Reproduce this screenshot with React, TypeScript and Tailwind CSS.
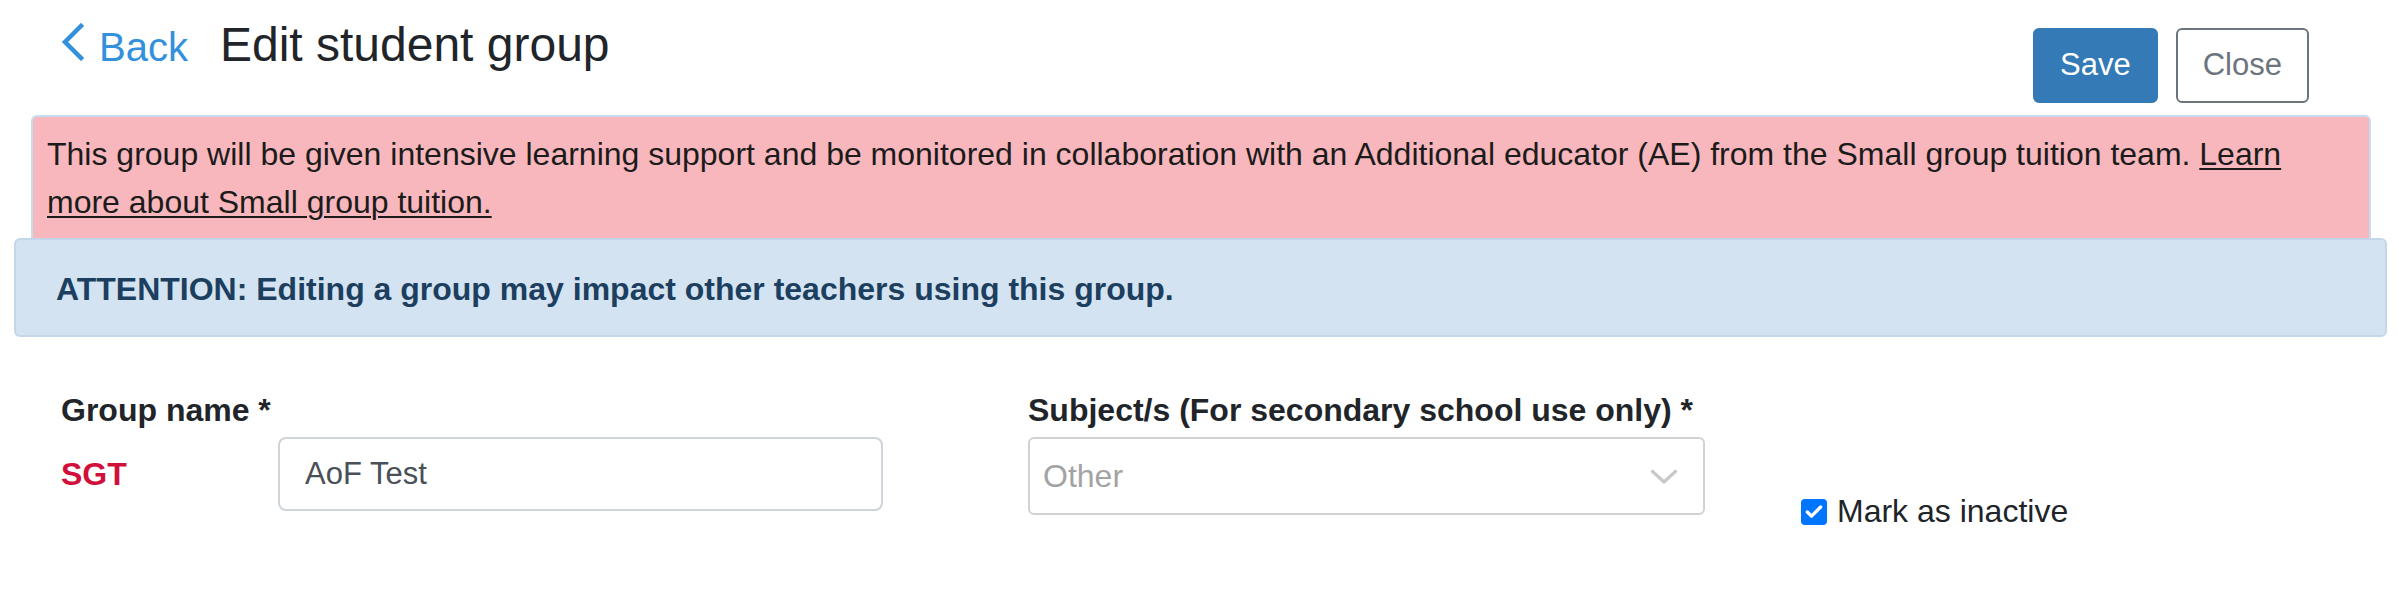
import { Check } from 'lucide-react'

export default function App() {
  return (
    <div className="w-[2399px] h-[591px] bg-white text-[#212529] font-['Liberation_Sans',Arial,sans-serif]">
      {/* Header */}
      <div className="h-[115px] flex items-start justify-between pl-[61px] pr-[90px]">
        <div className="flex items-baseline pt-[17px]">
          <a href="#" className="flex items-baseline gap-[15px] text-[40px] leading-[56px] text-[#3390dc]">
            <svg width="23" height="38" viewBox="0 0 23 38" className="mb-[-5px]" fill="none">
              <polyline points="20,3 4,19 20,35" stroke="#3390dc" strokeWidth="4.5" strokeLinecap="square" />
            </svg>
            <span>Back</span>
          </a>
          <h1 className="ml-[32px] text-[48px] leading-[56px] font-normal text-[#212529]">Edit student group</h1>
        </div>
        <div className="flex gap-[18px] pt-[28px]">
          <button className="h-[75px] px-[25px] rounded-[6px] border-2 border-[#337ab7] bg-[#337ab7] text-white text-[31px]">
            Save
          </button>
          <button className="h-[75px] px-[25px] rounded-[6px] border-2 border-[#6c757d] bg-white text-[#6c757d] text-[31px]">
            Close
          </button>
        </div>
      </div>

      {/* SGT notice */}
      <div className="ml-[31px] mr-[28px] border-x-2 border-t-2 border-[#c6dcef] rounded-t-[6px] bg-[#f8b7bc] pt-[13px] pb-[12px] pl-[14px] pr-[40px] text-[32px] leading-[48px] text-[#1b1b1b]">
        This group will be given intensive learning support and be monitored in collaboration with an Additional educator (AE) from the Small group tuition team.{' '}
        <a href="#" className="underline decoration-2 underline-offset-[3px]">
          Learn more about Small group tuition.
        </a>
      </div>

      {/* Attention */}
      <div className="ml-[14px] mr-[12px] h-[99px] flex items-center pt-[3px] pl-[40px] border-2 border-[#c4d7ea] rounded-[6px] bg-[#d4e3f1] text-[32px] font-bold text-[#1c3f60]">
        ATTENTION: Editing a group may impact other teachers using this group.
      </div>

      {/* Form */}
      <div className="flex items-start pl-[61px] pt-[55px] text-[32px]">
        <div className="flex flex-col">
          <label className="font-bold leading-[37px]">Group name *</label>
          <div className="flex items-center mt-[8px]">
            <span className="w-[217px] font-bold text-[#d0103a]">SGT</span>
            <input
              defaultValue="AoF Test"
              className="w-[605px] h-[74px] px-[25px] border-2 border-[#cfd4da] rounded-[8px] text-[31px] text-[#495057] outline-none"
            />
          </div>
        </div>

        <div className="flex flex-col ml-[145px]">
          <label className="font-bold leading-[37px]">Subject/s (For secondary school use only) *</label>
          <div className="mt-[8px] w-[677px] h-[78px] flex items-center justify-between pl-[13px] pr-[25px] border-2 border-[#d2d2d2] rounded-[6px] text-[#a3a3a3]">
            <span>Other</span>
            <svg width="28" height="15" viewBox="0 0 28 15" fill="none">
              <polyline points="1.5,1.5 14,13 26.5,1.5" stroke="#c8c8c8" strokeWidth="3.2" />
            </svg>
          </div>
        </div>

        <label className="flex items-baseline gap-[10px] ml-[96px] mt-[101px] leading-[37px]">
          <span className="w-[26px] h-[26px] rounded-[4px] bg-[#0075ff] flex items-center justify-center">
            <Check size={20} strokeWidth={4} className="text-white" />
          </span>
          <span>Mark as inactive</span>
        </label>
      </div>
    </div>
  )
}
